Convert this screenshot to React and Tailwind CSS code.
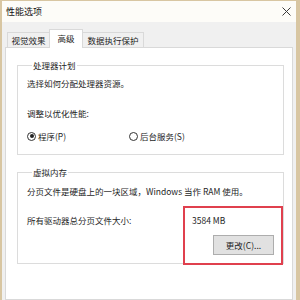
export default function App() {
  const font = { fontFamily: '"Noto Sans CJK SC", "Noto Sans", sans-serif' };
  return (
    <div
      className="relative w-[300px] h-[300px] overflow-hidden bg-[#d8c6a2] pl-[2px] pr-[4px] pt-[1px] flex flex-col text-[#1e1e1e]"
      style={font}
    >
      {/* title bar */}
      <div className="h-[21px] bg-[#fdfcf8] flex items-center justify-between pl-[4px] pr-[5px] shrink-0">
        <span className="text-[9px] leading-[12px] text-[#111]">性能选项</span>
        <svg width="9" height="9" viewBox="0 0 9 9">
          <path d="M0.5 0.5 L8.5 8.5 M8.5 0.5 L0.5 8.5" stroke="#3a3a3a" strokeWidth="1" fill="none" />
        </svg>
      </div>
      {/* body */}
      <div className="flex-1 bg-[#f0f0f0] px-[3px] flex flex-col">
        {/* tabs */}
        <div className="h-[25px] flex items-end pl-[2px] shrink-0">
          <div className="w-[43px] h-[15px] border border-b-0 border-[#d9d9d9] bg-[#f0f0f0] flex items-center justify-center text-[8.5px] leading-[12px]">
            视觉效果
          </div>
          <div className="w-[34px] h-[19px] -mb-[1px] border border-b-0 border-[#d9d9d9] bg-white flex items-start justify-center pt-[2px] text-[8.5px] leading-[12px] relative z-10 -ml-[1px]">
            高级
          </div>
          <div className="w-[61px] h-[15px] border border-b-0 border-l-0 border-[#d9d9d9] bg-[#f0f0f0] flex items-center justify-center text-[8.5px] leading-[12px]">
            数据执行保护
          </div>
        </div>
        {/* panel */}
        <div className="flex-1 bg-white border border-[#d9d9d9] pt-[11px] pl-[11px]">
          <fieldset className="w-[267px] border border-[#dcdcdc] pl-[9px] pb-[12px]">
            <legend className="ml-[5px] px-[1px] text-[8.5px] leading-[12px]">处理器计划</legend>
            <div className="mt-[6px] text-[8.5px] leading-[12px]">选择如何分配处理器资源。</div>
            <div className="mt-[18px] text-[8.5px] leading-[12px]">调整以优化性能:</div>
            <div className="mt-[11px] flex items-center text-[8.5px] leading-[12px]">
              <div className="flex items-center w-[102px]">
                <span className="w-[9px] h-[9px] rounded-full border border-[#333] flex items-center justify-center mr-[2px]">
                  <span className="w-[4px] h-[4px] rounded-full bg-[#222]" />
                </span>
                <span>程序(P)</span>
              </div>
              <div className="flex items-center">
                <span className="w-[9px] h-[9px] rounded-full border border-[#333] mr-[2px]" />
                <span>后台服务(S)</span>
              </div>
            </div>
          </fieldset>
          <fieldset className="mt-[11px] w-[267px] border border-[#dcdcdc] pl-[9px] pr-[9px] pb-[8px]">
            <legend className="ml-[5px] px-[1px] text-[8.5px] leading-[12px]">虚拟内存</legend>
            <div className="mt-[7px] text-[8.5px] leading-[12px] whitespace-nowrap">
              分页文件是硬盘上的一块区域，Windows 当作 RAM 使用。
            </div>
            <div className="mt-[17px] flex text-[8.5px] leading-[12px]">
              <span className="w-[165px]">所有驱动器总分页文件大小:</span>
              <span>3584 MB</span>
            </div>
            <div className="mt-[9px] flex justify-end">
              <div className="w-[61px] h-[20px] bg-[#e1e1e1] border border-[#adadad] flex items-center justify-center text-[8.5px] leading-[12px]">
                更改(C)...
              </div>
            </div>
          </fieldset>
        </div>
      </div>
      {/* red highlight */}
      <div className="absolute left-[183px] top-[206px] w-[100px] h-[59px] border-2 border-[#e0404e]" />
    </div>
  );
}
